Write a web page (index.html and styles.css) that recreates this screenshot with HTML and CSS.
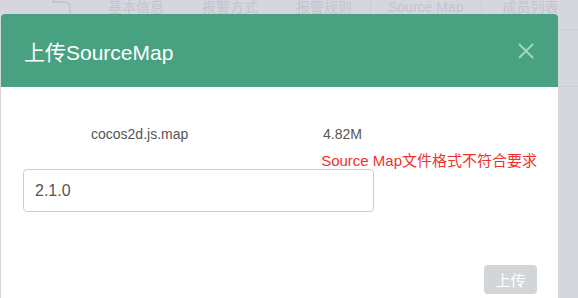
FILE: index.html
```html
<!DOCTYPE html>
<html lang="zh-CN">
<head>
    <meta charset="UTF-8">
    <meta name="viewport" content="width=device-width, initial-scale=1.0">
    <title>上传SourceMap</title>
    <link rel="stylesheet" href="styles.css">
</head>
<body>
    <div class="page">
        <div class="tab-bar">
            <svg class="back-icon" width="22" height="16" viewBox="0 0 22 16">
                <path d="M2 4 H14 A6 6 0 0 1 20 10 V16 M2 4 L6 0" fill="none" stroke="#c6c6d0" stroke-width="2"/>
            </svg>
            <span class="tab tab-first">基本信息</span>
            <span class="tab">报警方式</span>
            <span class="tab">报警规则</span>
            <span class="tab-sep"></span>
            <span class="tab tab-en">Source Map</span>
            <span class="tab-sep"></span>
            <span class="tab tab-last">成员列表</span>
        </div>
        <div class="sub-bar"></div>
    </div>

    <div class="modal">
        <div class="modal-header">
            <span class="modal-title">上传SourceMap</span>
            <svg class="close-icon" width="16" height="16" viewBox="0 0 16 16">
                <path d="M1 1 L15 15 M15 1 L1 15" stroke="#a0d5c0" stroke-width="2"/>
            </svg>
        </div>
        <div class="modal-body">
            <div class="file-row">
                <span class="file-name">cocos2d.js.map</span>
                <span class="file-size">4.82M</span>
            </div>
            <div class="error-msg">Source Map文件格式不符合要求</div>
            <input class="version-input" type="text" value="2.1.0">
            <div class="modal-footer">
                <button class="upload-button" disabled>上传</button>
            </div>
        </div>
    </div>
</body>
</html>
```

FILE: styles.css
```css
html, body {
    height: 298px;
}
body {
    margin: 0;
    padding: 0;
    background-color: #d6d6df;
    font-family: "Liberation Sans", "Noto Sans CJK SC", sans-serif;
    overflow: hidden;
    position: relative;
}
.tab-bar {
    display: flex;
    align-items: flex-start;
    height: 30px;
    border-bottom: 1px solid #cdcdd8;
    box-sizing: border-box;
}
.back-icon {
    margin-left: 50px;
    margin-top: -2px;
}
.tab {
    font-size: 14px;
    line-height: 14px;
    color: #c4c4cf;
    margin-left: 38px;
}
.tab-first {
    margin-left: 36px;
}
.tab-sep {
    width: 1px;
    height: 30px;
    background-color: #cdcdd8;
    margin-left: 18px;
}
.tab-en {
    margin-left: 17px;
}
.tab-last {
    margin-left: 20px;
}
.sub-bar {
    height: 56px;
    border-bottom: 1px solid #cdcdd8;
}
.modal {
    position: absolute;
    left: 1px;
    top: 14px;
    bottom: 0;
    width: 557px;
    background-color: #fff;
    border-radius: 4px 4px 0 0;
    overflow: hidden;
}
.modal-header {
    height: 73px;
    background-color: #48a281;
    display: flex;
    align-items: center;
    justify-content: space-between;
    padding: 0 24px 0 23px;
}
.modal-title {
    color: #fff;
    font-size: 21px;
}
.modal-body {
    padding: 0 21px 0 22px;
}
.file-row {
    display: flex;
    margin-top: 37px;
    padding-left: 68px;
    font-size: 14px;
    line-height: 20px;
    color: #555;
}
.file-name {
    width: 232px;
}
.error-msg {
    margin-top: 9px;
    text-align: right;
    font-size: 15px;
    line-height: 16px;
    color: #f2302c;
}
.version-input {
    display: block;
    box-sizing: border-box;
    width: 351px;
    height: 43px;
    margin: 0;
    border: 1px solid #ccc;
    border-radius: 4px;
    padding: 0 11px;
    font-family: "Liberation Sans", sans-serif;
    font-size: 16px;
    color: #555;
}
.modal-footer {
    display: flex;
    justify-content: flex-end;
    margin-top: 53px;
}
.upload-button {
    width: 53px;
    height: 29px;
    padding: 0;
    border: none;
    border-radius: 4px;
    background-color: #d3d6d9;
    color: #fff;
    font-family: "Noto Sans CJK SC", sans-serif;
    font-size: 15px;
}
```
